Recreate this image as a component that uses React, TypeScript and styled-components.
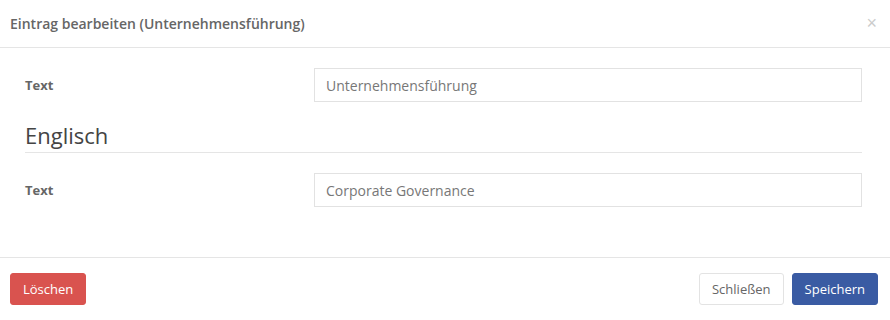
import React from 'react';
import styled, { createGlobalStyle } from 'styled-components';

const GlobalStyle = createGlobalStyle`
    body {
        margin: 0;
        background: #fff;
        font-family: "Open Sans", "Liberation Sans", sans-serif;
    }
`
const Modal = styled.div`
    width: 890px;
    height: 320px;
    background: #fff;
    display: flex;
    flex-direction: column;
`
const Header = styled.header`
    height: 47px;
    border-bottom: 1px solid #e5e5e5;
    display: flex;
    align-items: center;
    justify-content: space-between;
    padding: 0 13px 0 10px;
`
const Title = styled.h4`
    margin: 0;
    font-size: 14px;
    font-weight: 600;
    color: #666;
`
const Close = styled.button`
    border: 0;
    background: none;
    padding: 0;
    font-size: 18px;
    line-height: 1;
    color: #ccc;
    margin-top: -2px;
`
const Body = styled.div`
    padding: 20px 28px 0 25px;
    flex: 1;
`
const Row = styled.div`
    display: grid;
    grid-template-columns: 289px 1fr;
    align-items: center;
    margin-bottom: 18px;
`
const Label = styled.label`
    font-size: 13px;
    font-weight: 700;
    color: #666;
`
const Input = styled.input`
    height: 34px;
    box-sizing: border-box;
    border: 1px solid #e2e2e2;
    padding: 0 11px;
    font-family: inherit;
    font-size: 14px;
    color: #777;
    outline: none;
`
const Section = styled.h3`
    margin: 0 0 20px;
    font-size: 22px;
    font-weight: 400;
    color: #444;
    line-height: 30px;
    padding-bottom: 2px;
    border-bottom: 1px solid #e5e5e5;
`
const Footer = styled.footer`
    border-top: 1px solid #e5e5e5;
    height: 63px;
    padding: 15px 12px 0 10px;
    box-sizing: border-box;
    display: flex;
    align-items: flex-start;
    gap: 8px;
`
const Spacer = styled.div`
    flex: 1;
`
const Button = styled.button<{ $kind: 'danger' | 'default' | 'primary' }>`
    height: 32px;
    padding: 0 12px;
    border-radius: 3px;
    font-family: inherit;
    font-size: 13px;
    border: 1px solid ${p => p.$kind === 'danger' ? '#d9534f' : p.$kind === 'primary' ? '#3a5ba3' : '#e3e3e3'};
    background: ${p => p.$kind === 'danger' ? '#d9534f' : p.$kind === 'primary' ? '#3a5ba3' : '#fff'};
    color: ${p => p.$kind === 'default' ? '#666' : '#fff'};
`

function App() {
    return (
        <Modal>
            <GlobalStyle />
            <Header>
                <Title>Eintrag bearbeiten (Unternehmensführung)</Title>
                <Close>×</Close>
            </Header>
            <Body>
                <Row>
                    <Label>Text</Label>
                    <Input defaultValue="Unternehmensführung" />
                </Row>
                <Section>Englisch</Section>
                <Row>
                    <Label>Text</Label>
                    <Input defaultValue="Corporate Governance" />
                </Row>
            </Body>
            <Footer>
                <Button $kind="danger">Löschen</Button>
                <Spacer />
                <Button $kind="default">Schließen</Button>
                <Button $kind="primary">Speichern</Button>
            </Footer>
        </Modal>
    )
}

export default App;
